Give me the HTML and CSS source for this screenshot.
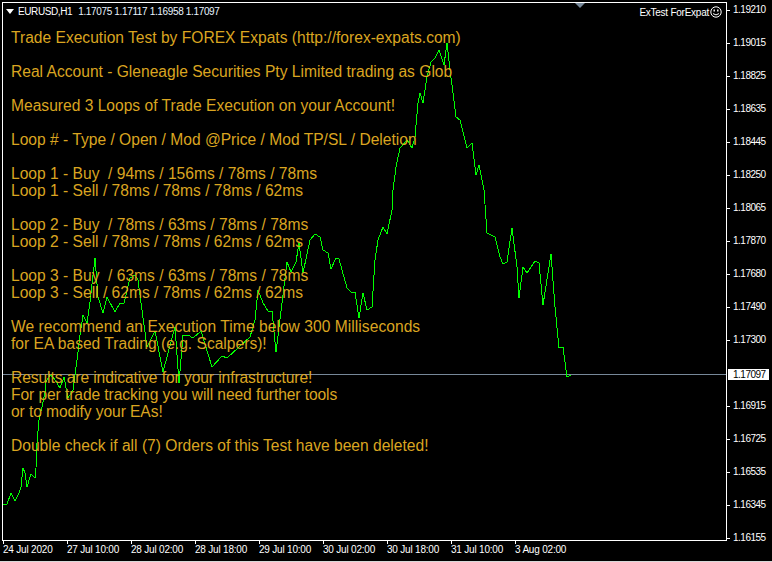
FILE: index.html
```html
<!DOCTYPE html>
<html>
<head>
    <meta charset="utf-8" />
    <title>EURUSD,H1</title>
    <link rel="stylesheet" href="styles.css">
</head>
<body>
    <div id="terminal">
        <div id="chart-row">
            <div id="plot">
                <div id="symbol">
                    <span id="symbol-arrow"></span>
                    <span id="symbol-name">EURUSD,H1</span>
                    <span id="symbol-quotes">1.17075 1.17117 1.16958 1.17097</span>
                </div>
                <div id="expert">
                    <span>ExTest ForExpat</span>
                    <svg width="12" height="12" viewBox="0 0 12 12">
                        <circle cx="6" cy="6" r="5.2" fill="none" stroke="#fff" />
                        <rect x="3.5" y="3.5" width="1.4" height="2" fill="#fff" />
                        <rect x="7.1" y="3.5" width="1.4" height="2" fill="#fff" />
                        <path d="M3 7.6 Q6 10.2 9 7.6" fill="none" stroke="#fff" />
                    </svg>
                </div>
                <span id="shift-mark"></span>
                <svg id="price-line" width="724" height="538" viewBox="3 3 724 538">
                    <line class="bid-line" x1="3" y1="374.5" x2="727" y2="374.5" />
                    <polyline class="close-line" points="3,505 7,504 11,493 15,501 19,493 21,487 23,468 25,473 27,487 31,474 35,478 36,468 37,443 39,420 42,407 45,392 46,382 50,375 53,377 60,388 64,377 68,398 73,390 78,352 80,335 83,315 87,323 90,302 95,258 98,297 103,313 107,297 115,312 120,303 124,303 130,278 135,275 138,280 142,310 147,347 155,331 163,372 175,327 179,383 183,335 188,335 193,338 201,331 212,367 222,356 227,358 250,337 255,320 258,290 263,303 268,311 272,311 276,352 282,303 287,262 291,272 296,262 299,243 303,273 310,240 315,234 320,237 323,250 328,253 331,269 336,258 339,259 347,288 352,293 355,292 359,318 363,293 367,310 372,307 375,260 378,240 383,227 387,234 392,210 393,190 396,167 400,148 407,140 412,148 415,137 418,103 420,93 423,103 427,77 431,62 435,58 439,50 444,65 447,43 450,70 453,93 456,117 460,120 467,148 472,143 476,175 479,165 484,190 487,233 495,237 500,257 503,264 507,262 512,228 517,267 519,298 523,267 527,273 535,261 539,263 543,305 551,254 555,307 559,348 563,347 567,377 571,375" />
                </svg>
                <div id="report">
                    <div class="line">Trade Execution Test by FOREX Expats (http://forex-expats.com)</div>
                    <div class="line"></div>
                    <div class="line">Real Account - Gleneagle Securities Pty Limited trading as Glob</div>
                    <div class="line"></div>
                    <div class="line">Measured 3 Loops of Trade Execution on your Account!</div>
                    <div class="line"></div>
                    <div class="line">Loop # - Type / Open / Mod @Price / Mod TP/SL / Deletion</div>
                    <div class="line"></div>
                    <div class="line">Loop 1 - Buy  / 94ms / 156ms / 78ms / 78ms</div>
                    <div class="line">Loop 1 - Sell / 78ms / 78ms / 78ms / 62ms</div>
                    <div class="line"></div>
                    <div class="line">Loop 2 - Buy  / 78ms / 63ms / 78ms / 78ms</div>
                    <div class="line">Loop 2 - Sell / 78ms / 78ms / 62ms / 62ms</div>
                    <div class="line"></div>
                    <div class="line">Loop 3 - Buy  / 63ms / 63ms / 78ms / 78ms</div>
                    <div class="line">Loop 3 - Sell / 62ms / 78ms / 62ms / 62ms</div>
                    <div class="line"></div>
                    <div class="line wide">We recommend an Execution Time below 300 Milliseconds</div>
                    <div class="line">for EA based Trading (e.g. Scalpers)!</div>
                    <div class="line"></div>
                    <div class="line tight">Results are indicative for your infrastructure!</div>
                    <div class="line tight">For per trade tracking you will need further tools</div>
                    <div class="line tight">or to modify your EAs!</div>
                    <div class="line"></div>
                    <div class="line">Double check if all (7) Orders of this Test have been deleted!</div>
                </div>
            </div>
            <div id="price-axis">
                <div class="price">1.19210</div>
                <div class="price">1.19015</div>
                <div class="price">1.18825</div>
                <div class="price">1.18635</div>
                <div class="price">1.18445</div>
                <div class="price">1.18250</div>
                <div class="price">1.18065</div>
                <div class="price">1.17870</div>
                <div class="price">1.17680</div>
                <div class="price">1.17490</div>
                <div class="price">1.17300</div>
                <div class="price empty"></div>
                <div class="price">1.16915</div>
                <div class="price">1.16725</div>
                <div class="price">1.16535</div>
                <div class="price">1.16345</div>
                <div class="price">1.16155</div>
                <div id="bid-label">1.17097</div>
            </div>
        </div>
        <div id="time-axis">
            <div class="time">24 Jul 2020</div>
            <div class="time">27 Jul 10:00</div>
            <div class="time">28 Jul 02:00</div>
            <div class="time">28 Jul 18:00</div>
            <div class="time">29 Jul 10:00</div>
            <div class="time">30 Jul 02:00</div>
            <div class="time">30 Jul 18:00</div>
            <div class="time">31 Jul 10:00</div>
            <div class="time">3 Aug 02:00</div>
        </div>
    </div>
</body>
</html>
```

FILE: styles.css
```css
html, body {
    margin: 0;
    background-color: #000;
    height: 100%;
    overflow: hidden;
}

#terminal {
    width: 772px;
    height: 562px;
    box-sizing: border-box;
    padding-top: 2px;
    border-bottom: 1px solid #d8d8d8;
    color: #fff;
    font-family: "Liberation Sans", Arial, sans-serif;
    font-size: 10px;
}

#chart-row {
    display: flex;
    height: 539px;
}

#plot {
    position: relative;
    width: 725px;
    margin-left: 2px;
    box-sizing: border-box;
    border: 1px solid #fff;
    overflow: hidden;
}

#symbol {
    position: absolute;
    left: 3px;
    top: 1px;
    display: flex;
    align-items: center;
    gap: 4px;
    height: 14px;
}

#symbol-arrow {
    width: 0;
    height: 0;
    border-left: 4px solid transparent;
    border-right: 4px solid transparent;
    border-top: 5px solid #fff;
}

#symbol-name {
    letter-spacing: -0.4px;
}

#symbol-quotes {
    margin-left: 2px;
    color: #e8f4ff;
    letter-spacing: -0.35px;
}

#expert {
    position: absolute;
    right: 4px;
    top: 2px;
    display: flex;
    align-items: center;
    gap: 1px;
    height: 14px;
    letter-spacing: -0.25px;
}

#shift-mark {
    position: absolute;
    left: 572px;
    top: 0;
    width: 0;
    height: 0;
    border-left: 5px solid transparent;
    border-right: 5px solid transparent;
    border-top: 5px solid #778899;
}

#price-line {
    position: absolute;
    left: 0;
    top: 0;
    shape-rendering: crispEdges;
}

.bid-line {
    stroke: #778899;
    stroke-width: 1;
}

.close-line {
    fill: none;
    stroke: #00ff00;
    stroke-width: 1;
}

#report {
    position: absolute;
    left: 8px;
    top: 26px;
    color: #daa520;
    font-size: 15.6px;
    line-height: 17px;
}

.line {
    height: 17px;
    white-space: pre;
}

.tight {
    letter-spacing: -0.08px;
}

.wide {
    letter-spacing: 0.04px;
}

#price-axis {
    position: relative;
    flex: 1;
    padding-top: 2px;
    letter-spacing: -0.5px;
}

.price {
    position: relative;
    height: 33px;
    line-height: 12px;
    padding-left: 6px;
}

.price::before {
    content: "";
    position: absolute;
    left: 0;
    top: 6px;
    width: 3px;
    height: 1px;
    background-color: #fff;
}

.price.empty::before {
    display: none;
}

#bid-label {
    position: absolute;
    left: 1px;
    top: 367px;
    width: 41px;
    height: 11px;
    padding-left: 5px;
    box-sizing: border-box;
    background-color: #fff;
    color: #000;
    line-height: 11px;
}

#time-axis {
    display: flex;
    padding-left: 3px;
    letter-spacing: -0.2px;
}

.time {
    position: relative;
    width: 64px;
    height: 19px;
    padding-top: 2px;
    box-sizing: border-box;
    line-height: 14px;
    white-space: nowrap;
}

.time::before {
    content: "";
    position: absolute;
    left: 0;
    top: 0;
    width: 1px;
    height: 3px;
    background-color: #fff;
}
```
